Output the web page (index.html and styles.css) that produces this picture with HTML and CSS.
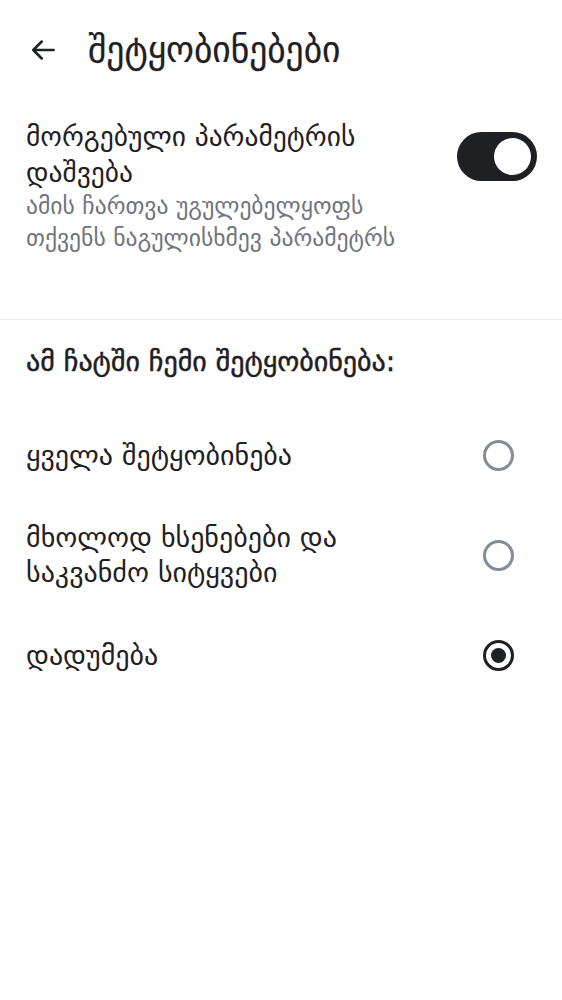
FILE: index.html
```html
<!DOCTYPE html>
<html lang="ka">
<head>
<meta charset="utf-8">
<link rel="stylesheet" href="styles.css">
</head>
<body>
<div class="app">
  <header class="topbar">
    <button class="back" aria-label="back">
      <svg width="30" height="30" viewBox="0 0 24 24"><path d="M20.5 12H4.5M11 5.2l-6.8 6.8 6.8 6.8" fill="none" stroke="#1f2024" stroke-width="2" stroke-linecap="round" stroke-linejoin="round"/></svg>
    </button>
    <h1 class="title">შეტყობინებები</h1>
  </header>

  <section class="custom">
    <div class="custom-text">
      <div class="custom-title">მორგებული პარამეტრის დაშვება</div>
      <div class="custom-sub">ამის ჩართვა უგულებელყოფს თქვენს ნაგულისხმევ პარამეტრს</div>
    </div>
    <div class="toggle"><div class="knob"></div></div>
  </section>

  <div class="divider"></div>

  <h2 class="section-title">ამ ჩატში ჩემი შეტყობინება:</h2>

  <div class="options">
    <div class="option">
      <div class="option-label">ყველა შეტყობინება</div>
      <div class="radio"></div>
    </div>
    <div class="option">
      <div class="option-label">მხოლოდ ხსენებები და საკვანძო სიტყვები</div>
      <div class="radio"></div>
    </div>
    <div class="option">
      <div class="option-label">დადუმება</div>
      <div class="radio checked"></div>
    </div>
  </div>
</div>
</body>
</html>
```
FILE: styles.css
```css
* { box-sizing: border-box; }
html, body { margin: 0; padding: 0; background: #fff; }
body {
  font-family: "DejaVu Sans", "Noto Sans", sans-serif;
  color: #1f2024;
  width: 562px;
}
.topbar {
  display: flex;
  align-items: center;
  height: 100px;
  padding-left: 28px;
}
.back {
  border: 0;
  background: none;
  padding: 0;
  width: 30px;
  height: 30px;
  display: flex;
  align-items: center;
  justify-content: center;
  margin-right: 30px;
}
.title {
  margin: 0;
  font-size: 35.5px;
  font-weight: 400;
  -webkit-text-stroke: 0.25px #1f2024;
  line-height: 40px;
}
.custom {
  display: flex;
  align-items: flex-start;
  padding: 18px 25px 0 26px;
  height: 219px;
}
.custom-text { flex: 1; padding-right: 40px; }
.custom-title {
  font-size: 27.5px;
  line-height: 36px;
}
.custom-sub {
  font-size: 23.6px;
  line-height: 32px;
  color: #70747c;
}
.toggle {
  width: 80px;
  height: 49px;
  border-radius: 25px;
  background: #1f2024;
  margin-top: 14px;
  position: relative;
  flex: none;
}
.knob {
  position: absolute;
  right: 6px;
  top: 6px;
  width: 37px;
  height: 37px;
  border-radius: 50%;
  background: #fff;
}
.divider { height: 1px; background: #ececee; }
.section-title {
  margin: 0;
  font-size: 28px;
  font-weight: 400;
  -webkit-text-stroke: 0.5px #1f2024;
  padding: 24px 26px 0;
  line-height: 36px;
  height: 85px;
}
.options { display: flex; flex-direction: column; }
.option {
  display: flex;
  align-items: center;
  padding: 0 48px 0 26px;
  min-height: 100px;
}
.option-label {
  flex: 1;
  font-size: 28px;
  line-height: 35px;
  padding-right: 60px;
}
.radio {
  width: 31px;
  height: 31px;
  border-radius: 50%;
  border: 3px solid #868c96;
  flex: none;
  position: relative;
}
.radio.checked { border-color: #1f2024; }
.radio.checked::after {
  content: "";
  position: absolute;
  left: 5px; top: 5px;
  width: 15px; height: 15px;
  border-radius: 50%;
  background: #1f2024;
}
```
